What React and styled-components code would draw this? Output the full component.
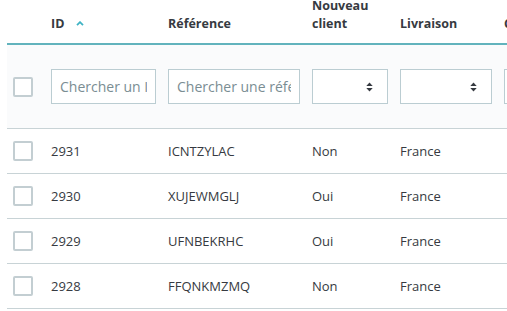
import styled, {createGlobalStyle} from "styled-components";

const GlobalStyle = createGlobalStyle`
  body {
    margin: 0;
    background: #ffffff;
    font-family: "Open Sans", "Liberation Sans", sans-serif;
    color: #363a41;
  }
`;

const Viewport = styled.div`
  width: 507px;
  height: 311px;
  overflow: hidden;
  padding-left: 7px;
  box-sizing: border-box;
`;

const Table = styled.table`
  margin-top: -13px;
  border-collapse: collapse;
  table-layout: fixed;
  width: 640px;
`;

const Col = styled.col`
  width: ${p => p.w}px;
`;

const HeadCell = styled.th`
  padding: 10px 6px;
  vertical-align: bottom;
  text-align: left;
  font-size: 12.5px;
  font-weight: 700;
  line-height: 18px;
  color: #363a41;
  border-bottom: 2px solid #62b3bd;
  white-space: normal;
`;

const SortCaret = styled.svg`
  margin-left: 12px;
  vertical-align: 2px;
`;

const FilterRow = styled.tr`
  background: #fafbfc;
  border-bottom: 1px solid #c8d3d6;
`;

const FilterCell = styled.td`
  height: 83px;
  padding: 0 6px;
  vertical-align: middle;
`;

const Row = styled.tr`
  border-bottom: 1px solid #c8d3d6;
`;

const Cell = styled.td`
  height: 44px;
  padding: 0 6px;
  vertical-align: middle;
  font-size: 13px;
  color: #363a41;
  white-space: nowrap;
  overflow: hidden;
`;

const CheckBox = styled.span`
  display: block;
  width: 20px;
  height: 20px;
  box-sizing: border-box;
  border: 2px solid #c3ced2;
  border-radius: 2px;
  background: #ffffff;
`;

const SearchInput = styled.input`
  display: block;
  width: 100%;
  height: 35px;
  box-sizing: border-box;
  border: 1px solid #bbcdd2;
  border-radius: 0;
  padding: 0 8px;
  font-family: "Open Sans", "Liberation Sans", sans-serif;
  font-size: 14px;
  color: #363a41;
  background: #ffffff;
  outline: none;

  &::placeholder {
    color: #7a8d93;
  }
`;

const SelectBox = styled.div`
  display: flex;
  align-items: center;
  justify-content: flex-end;
  width: 100%;
  height: 35px;
  box-sizing: border-box;
  border: 1px solid #bbcdd2;
  padding-right: 14px;
  background: #ffffff;
`;

function UpDown() {
    return (
        <svg width="7" height="10" viewBox="0 0 7 10">
            <path d="M0.3 4 L3.5 0.6 L6.7 4 Z" fill="#363a41"/>
            <path d="M0.3 6 L3.5 9.4 L6.7 6 Z" fill="#363a41"/>
        </svg>
    );
}

const orders = [
    {id: 2931, ref: "ICNTZYLAC", nouveau: "Non", pays: "France"},
    {id: 2930, ref: "XUJEWMGLJ", nouveau: "Oui", pays: "France"},
    {id: 2929, ref: "UFNBEKRHC", nouveau: "Oui", pays: "France"},
    {id: 2928, ref: "FFQNKMZMQ", nouveau: "Non", pays: "France"},
];

export default function App() {
    return (
        <Viewport>
            <GlobalStyle/>
            <Table>
                <colgroup>
                    <Col w={38}/>
                    <Col w={117}/>
                    <Col w={144}/>
                    <Col w={88}/>
                    <Col w={104}/>
                    <Col w={149}/>
                </colgroup>
                <thead>
                <tr>
                    <HeadCell/>
                    <HeadCell>
                        ID
                        <SortCaret width="8" height="5" viewBox="0 0 8 5">
                            <path d="M1 4.2 L4 1.2 L7 4.2" fill="none" stroke="#3fb3c4" strokeWidth="1.8"/>
                        </SortCaret>
                    </HeadCell>
                    <HeadCell>Référence</HeadCell>
                    <HeadCell>Nouveau client</HeadCell>
                    <HeadCell>Livraison</HeadCell>
                    <HeadCell>Client</HeadCell>
                </tr>
                </thead>
                <tbody>
                <FilterRow>
                    <FilterCell><CheckBox/></FilterCell>
                    <FilterCell><SearchInput placeholder="Chercher un ID"/></FilterCell>
                    <FilterCell><SearchInput placeholder="Chercher une référence"/></FilterCell>
                    <FilterCell><SelectBox><UpDown/></SelectBox></FilterCell>
                    <FilterCell><SelectBox><UpDown/></SelectBox></FilterCell>
                    <FilterCell><SearchInput placeholder="Chercher un client"/></FilterCell>
                </FilterRow>
                {orders.map(o => (
                    <Row key={o.id}>
                        <Cell><CheckBox/></Cell>
                        <Cell>{o.id}</Cell>
                        <Cell>{o.ref}</Cell>
                        <Cell>{o.nouveau}</Cell>
                        <Cell>{o.pays}</Cell>
                        <Cell/>
                    </Row>
                ))}
                </tbody>
            </Table>
        </Viewport>
    );
}
